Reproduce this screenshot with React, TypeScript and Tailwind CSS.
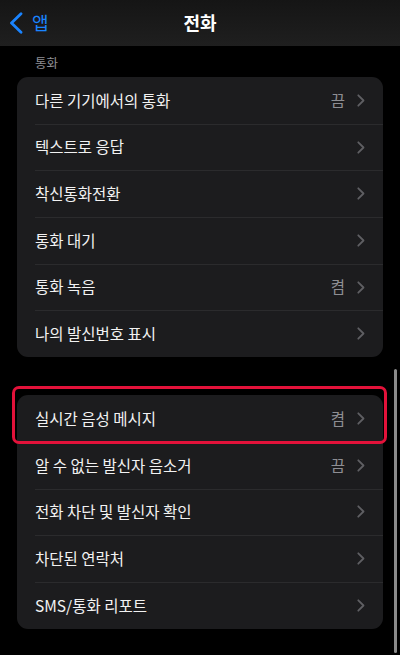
interface Row {
    label: string
    value?: string
}

const callRows: Row[] = [
    { label: '다른 기기에서의 통화', value: '끔' },
    { label: '텍스트로 응답' },
    { label: '착신통화전환' },
    { label: '통화 대기' },
    { label: '통화 녹음', value: '켬' },
    { label: '나의 발신번호 표시' },
]

const moreRows: Row[] = [
    { label: '실시간 음성 메시지', value: '켬' },
    { label: '알 수 없는 발신자 음소거', value: '끔' },
    { label: '전화 차단 및 발신자 확인' },
    { label: '차단된 연락처' },
    { label: 'SMS/통화 리포트' },
]

function Chevron() {
    return (
        <svg width="8" height="13" viewBox="0 0 8 13" fill="none" className="shrink-0">
            <polyline points="1.3,1.3 6.5,6.5 1.3,11.7" stroke="#5f5f63" strokeWidth="1.8" strokeLinecap="round" strokeLinejoin="round" />
        </svg>
    )
}

function SettingsGroup({ rows, highlightFirst }: { rows: Row[]; highlightFirst?: boolean }) {
    return (
        <div className="relative bg-[#1c1c1e] rounded-[11px]">
            {rows.map((row, idx) => (
                <div key={row.label} className="relative h-[46.7px] pl-[18px] pr-[18px] flex items-center">
                    {idx > 0 && <div className="absolute top-0 left-[18px] right-0 h-px bg-[#2b2b2d]" />}
                    <span className="flex-1 text-[15.5px] text-[#f2f2f2]">{row.label}</span>
                    {row.value && <span className="text-[15.5px] text-[#8e8e93] mr-[12px]">{row.value}</span>}
                    <Chevron />
                </div>
            ))}
            {highlightFirst && (
                <div className="absolute top-[-9px] left-[-5px] right-[-4px] h-[58px] border-[3px] border-[#e3123a] rounded-[7px]" />
            )}
        </div>
    )
}

export default function App() {
    return (
        <div
            className="relative w-[400px] h-[655px] bg-black overflow-hidden"
            style={{ fontFamily: '"Noto Sans CJK KR", "Noto Sans", sans-serif' }}
        >
            {/* Header */}
            <div className="relative h-[46px] bg-gradient-to-b from-[#151515] to-[#1f1f1f] flex items-center">
                <div className="relative z-10 flex items-center pl-[9px] text-[#1a84ff]">
                    <svg width="14" height="22" viewBox="0 0 14 22" fill="none">
                        <polyline points="12,1.8 2.5,11 12,20.2" stroke="#1a84ff" strokeWidth="2.8" strokeLinecap="round" strokeLinejoin="round" />
                    </svg>
                    <span className="ml-[9px] text-[18px] mb-[1px]">앱</span>
                </div>
                <h1 className="absolute left-0 right-0 text-center text-[18px] font-semibold text-white mb-[1px]">전화</h1>
            </div>

            {/* Content */}
            <div className="px-[17px]">
                <div className="pt-[7px] pb-[5px] pl-[18px] text-[12.5px] leading-[19px] text-[#8e8e93]">통화</div>
                <SettingsGroup rows={callRows} />
                <div className="h-[38px]" />
                <SettingsGroup rows={moreRows} highlightFirst />
            </div>

            {/* Scroll indicator */}
            <div className="absolute left-[394px] top-[369px] w-[2.5px] h-[284px] rounded-full bg-[#8a8a8a]" />
        </div>
    )
}
